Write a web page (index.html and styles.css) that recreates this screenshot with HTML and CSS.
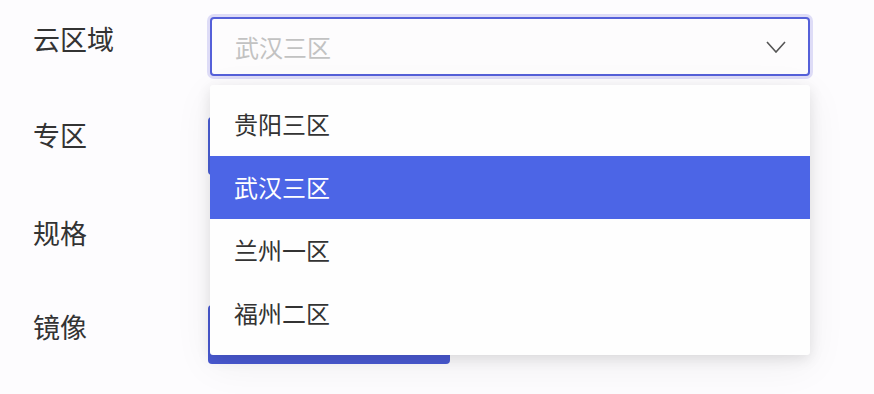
FILE: index.html
```html
<!DOCTYPE html>
<html lang="zh">
<head>
<meta charset="utf-8">
<link rel="stylesheet" href="styles.css">
</head>
<body>
<form class="form">
  <div class="row">
    <div class="label">云区域</div>
    <div class="control">
      <div class="select-wrap">
        <div class="select">
          <span class="placeholder">武汉三区</span>
          <svg class="chevron" width="20" height="12" viewBox="0 0 20 12"><polyline points="1,1 10,11 19,1" fill="none" stroke="#555" stroke-width="1.6"/></svg>
        </div>
        <ul class="dropdown">
          <li class="option">贵阳三区</li>
          <li class="option active">武汉三区</li>
          <li class="option">兰州一区</li>
          <li class="option">福州二区</li>
        </ul>
      </div>
    </div>
  </div>
  <div class="row row2">
    <div class="label">专区</div>
    <div class="control"><div class="box-outline"></div></div>
  </div>
  <div class="row row3">
    <div class="label">规格</div>
    <div class="control"></div>
  </div>
  <div class="row row4">
    <div class="label">镜像</div>
    <div class="control"><div class="box-fill"></div></div>
  </div>
</form>
</body>
</html>
```
FILE: styles.css
```css
* { box-sizing: border-box; }
html, body { margin: 0; padding: 0; }
body {
  background: #fdfcfe;
  font-family: "Noto Sans CJK SC", "Noto Sans", sans-serif;
  color: #333;
  width: 874px;
  height: 394px;
  overflow: hidden;
}
.form {
  padding: 17px 0 0 33px;
  display: flex;
  flex-direction: column;
}
.row {
  display: flex;
  align-items: flex-start;
  height: 59px;
  margin-bottom: 41px;
}
.row2 { margin-bottom: 35px; }
.row3 { margin-bottom: 35px; }
.label {
  width: 175px;
  font-size: 27px;
  line-height: 27px;
  padding-top: 8px;
  color: #333;
}
.row2 .label { padding-top: 4px; }
.control { flex: 1; position: relative; height: 59px; }
.select-wrap {
  position: relative;
  margin-left: 2px;
  width: 600px;
}
.select {
  height: 59px;
  border: 2px solid #5560d9;
  border-radius: 4px;
  box-shadow: 0 0 0 3px #dedcf7;
  background: #fdfcfd;
  display: flex;
  align-items: center;
  justify-content: space-between;
  padding: 0 22px 0 23px;
}
.placeholder {
  font-size: 24px;
  color: #c2c2c2;
  line-height: 1;
  margin-top: 0;
}
.chevron { display: block; margin-top: 0; }
.dropdown {
  position: absolute;
  left: 0;
  top: 68px;
  width: 600px;
  margin: 0;
  padding: 8px 0 10px;
  list-style: none;
  background: #fefefe;
  border-radius: 3px;
  box-shadow: 0 4px 14px rgba(0,0,0,0.10), 0 10px 40px rgba(0,0,0,0.06);
  z-index: 10;
}
.option {
  height: 63px;
  display: flex;
  align-items: center;
  padding-left: 24px;
  padding-bottom: 3px;
  font-size: 24px;
  color: #333;
}
.option.active {
  background: #4c65e6;
  color: #fff;
}
.box-outline {
  width: 300px;
  height: 58px;
  border: 2px solid #4b5fd6;
  border-radius: 4px;
  margin-top: 0;
}
.box-fill {
  width: 242px;
  height: 59px;
  background: #4a5ad3;
  border-radius: 4px;
}
```
